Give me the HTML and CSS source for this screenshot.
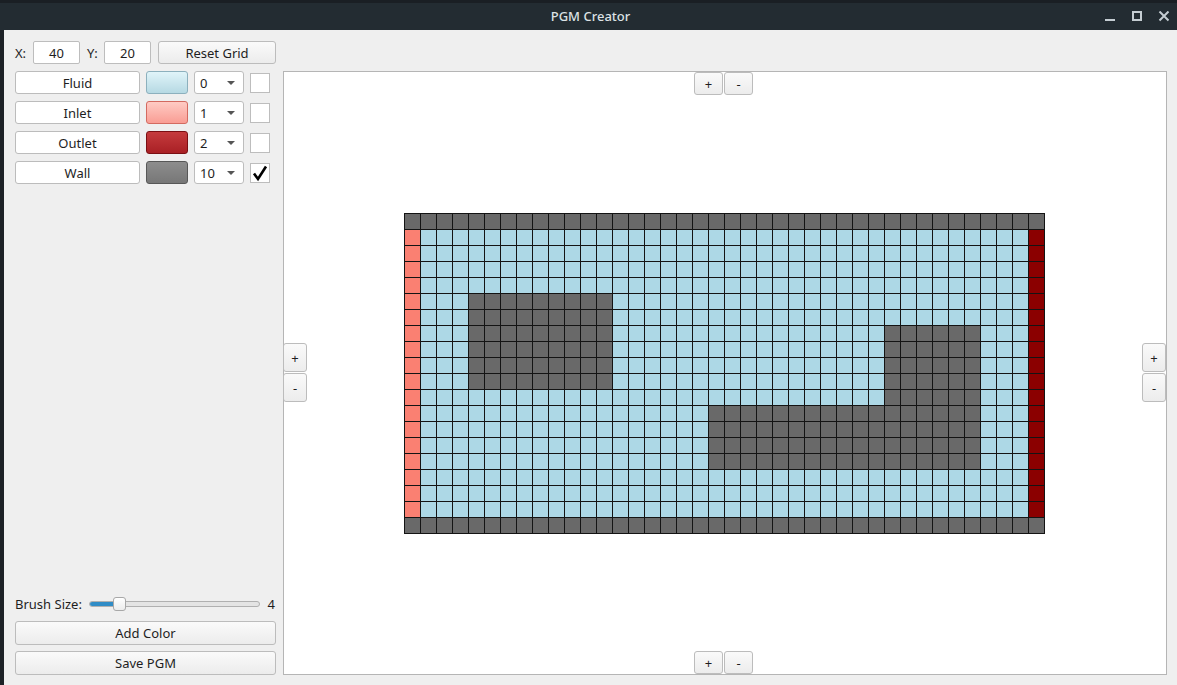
FILE: index.html
```html
<!DOCTYPE html>
<html>
<head>
<meta charset="utf-8">
<title>PGM Creator</title>
<link rel="stylesheet" href="styles.css">
</head>
<body>
<div class="titlebar">
  <span class="title">PGM Creator</span>
  <div class="wincontrols">
    <svg width="12" height="12" viewBox="0 0 12 12"><rect x="1" y="8" width="10" height="2" fill="#c5cdd2"/></svg>
    <svg width="12" height="12" viewBox="0 0 12 12"><rect x="2" y="1" width="8" height="8" fill="none" stroke="#c5cdd2" stroke-width="2"/></svg>
    <svg width="12" height="12" viewBox="0 0 12 12"><path d="M1.5 0.5 L10.5 9.5 M10.5 0.5 L1.5 9.5" stroke="#c5cdd2" stroke-width="2"/></svg>
  </div>
</div>
<div class="window">
  <div class="toprow">
    <span class="lbl lbl-x">X:</span>
    <div class="field">40</div>
    <span class="lbl lbl-y">Y:</span>
    <div class="field">20</div>
    <button class="btn reset">Reset Grid</button>
  </div>

  <div class="canvas">
    <div class="board">
      <div class="c wall row-top"></div>
      <div class="c wall row-bottom"></div>
      <div class="c inlet col-left"></div>
      <div class="c outlet col-right"></div>
      <div class="c wall blk1"></div>
      <div class="c wall blk2"></div>
      <div class="c wall blk3"></div>
    </div>
    <div class="pm pm-top"><button class="btn small">+</button><button class="btn small">-</button></div>
    <div class="pm pm-bottom"><button class="btn small">+</button><button class="btn small">-</button></div>
    <div class="pm pm-left"><button class="btn small v">+</button><button class="btn small v">-</button></div>
    <div class="pm pm-right"><button class="btn small v">+</button><button class="btn small v">-</button></div>
  </div>

  <div class="side">
    <div class="types">
      <div class="trow">
        <button class="btn name">Fluid</button>
        <div class="swatch sw-fluid"></div>
        <div class="combo"><span>0</span><i class="arrow"></i></div>
        <div class="check"></div>
      </div>
      <div class="trow">
        <button class="btn name">Inlet</button>
        <div class="swatch sw-inlet"></div>
        <div class="combo"><span>1</span><i class="arrow"></i></div>
        <div class="check"></div>
      </div>
      <div class="trow">
        <button class="btn name">Outlet</button>
        <div class="swatch sw-outlet"></div>
        <div class="combo"><span>2</span><i class="arrow"></i></div>
        <div class="check"></div>
      </div>
      <div class="trow">
        <button class="btn name">Wall</button>
        <div class="swatch sw-wall"></div>
        <div class="combo"><span>10</span><i class="arrow"></i></div>
        <div class="check"><svg width="18" height="18" viewBox="0 0 18 18"><path d="M3 9.5 L7 15 L15 2.5" fill="none" stroke="#000" stroke-width="2.6" stroke-linejoin="miter"/></svg></div>
      </div>
    </div>
    <div class="bottom">
      <div class="brush">
        <span class="blabel">Brush Size:</span>
        <div class="slider"><div class="groove"><div class="fill"></div></div><div class="handle"></div></div>
        <span class="bval">4</span>
      </div>
      <button class="btn wide">Add Color</button>
      <button class="btn wide">Save PGM</button>
    </div>
  </div>
</div>
</body>
</html>
```
FILE: styles.css
```css
* { box-sizing: border-box; }
html, body { margin: 0; padding: 0; }
body {
  width: 1177px;
  height: 685px;
  background: #1c2126;
  font-family: "Noto Sans", "Open Sans", sans-serif;
  font-size: 13px;
  color: #1e1e1e;
  overflow: hidden;
}
.titlebar {
  height: 30px;
  background: #232c32;
  border-top: 3px solid #1a1f24;
  position: relative;
  display: flex;
  align-items: center;
  justify-content: center;
  padding-left: 4px;
}
.title {
  color: #dde2e5;
  font-weight: 500;
  font-size: 13px;
  margin-top: -2px;
}
.wincontrols {
  position: absolute;
  right: 7px;
  top: 8px;
  display: flex;
  gap: 15px;
}
.window {
  margin-left: 4px;
  height: 655px;
  background: #efefef;
  display: grid;
  grid-template-columns: 261px 1fr;
  grid-template-rows: 23px 1fr;
  column-gap: 7px;
  row-gap: 7px;
  padding: 11px 10px 10px 11px;
}
.toprow {
  grid-column: 1;
  grid-row: 1;
  display: flex;
  align-items: center;
}
.lbl { display: inline-block; }
.lbl-x { width: 18px; }
.lbl-y { width: 17px; margin-left: 7px; }
.field {
  width: 47px;
  height: 23px;
  background: #fff;
  border: 1px solid #bdbdbd;
  border-radius: 2px;
  display: flex;
  align-items: center;
  justify-content: center;
}
.btn {
  font-family: inherit;
  font-size: 13px;
  color: #1e1e1e;
  border: 1px solid #bcbcbc;
  border-radius: 3px;
  background: linear-gradient(#fafafa, #ececec);
  padding: 0;
  margin: 0;
  display: flex;
  align-items: center;
  justify-content: center;
}
.reset { flex: 1; height: 23px; margin-left: 7px; }
.side {
  grid-column: 1;
  grid-row: 2;
  display: flex;
  flex-direction: column;
  justify-content: space-between;
}
.types { display: flex; flex-direction: column; gap: 7px; }
.trow { display: flex; align-items: center; height: 23px; gap: 6px; }
.name { width: 125px; height: 23px; background: #fff; }
.swatch {
  width: 42px;
  height: 23px;
  border-radius: 3px;
  border: 1px solid;
}
.sw-fluid { background: linear-gradient(#e0f4f9, #b6d9e3); border-color: #8cb0bd; }
.sw-inlet { background: linear-gradient(#ffcbc4, #f99d94); border-color: #d36a60; }
.sw-outlet { background: linear-gradient(#c53b3d, #a92025); border-color: #7a0f13; }
.sw-wall { background: linear-gradient(#8d8d8d, #777); border-color: #575757; }
.combo {
  width: 50px;
  height: 23px;
  background: #fff;
  border: 1px solid #bdbdbd;
  border-radius: 3px;
  display: flex;
  align-items: center;
  justify-content: space-between;
  padding: 0 8px 0 5px;
}
.arrow {
  width: 0; height: 0;
  border-left: 4px solid transparent;
  border-right: 4px solid transparent;
  border-top: 4px solid #555;
}
.check {
  width: 20px;
  height: 20px;
  background: #fff;
  border: 1px solid #bdbdbd;
  display: flex;
  align-items: center;
  justify-content: center;
}
.bottom { display: flex; flex-direction: column; gap: 6px; }
.brush {
  display: flex;
  align-items: center;
  height: 16px;
  margin-bottom: 3px;
}
.blabel { width: 74px; }
.slider { position: relative; width: 171px; height: 14px; }
.groove {
  position: absolute;
  left: 0; right: 0; top: 4px;
  height: 6px;
  border: 1px solid #b0b0b0;
  border-radius: 3px;
  background: #e4e4e4;
  overflow: hidden;
}
.fill { width: 26px; height: 100%; background: #308cc6; }
.handle {
  position: absolute;
  left: 24px; top: 0;
  width: 13px; height: 14px;
  border: 1px solid #a8a8a8;
  border-radius: 3px;
  background: linear-gradient(#fff, #ececec);
}
.bval { margin-left: auto; margin-right: 1px; }
.wide { height: 24px; width: 100%; }
.canvas {
  grid-column: 2;
  grid-row: 1 / 3;
  margin-top: 30px;
  position: relative;
  background: #fff;
  border: 1px solid #b5b5b5;
  display: flex;
  align-items: center;
  justify-content: center;
}
.board {
  position: relative;
  display: grid;
  grid-template-columns: repeat(40, 16px);
  grid-template-rows: repeat(20, 16px);
  width: 641px;
  height: 321px;
  padding: 0 1px 1px 0;
  margin-right: 1px;
  margin-top: 1px;
  background: #add8e6;
}
.board::after {
  content: "";
  position: absolute;
  inset: 0;
  background:
    repeating-linear-gradient(90deg, #141414 0 1px, transparent 1px 16px),
    repeating-linear-gradient(180deg, #141414 0 1px, transparent 1px 16px);
}
.wall { background: #696969; }
.inlet { background: #fa8072; }
.outlet { background: #8b0000; }
.row-top { grid-row: 1; grid-column: 1 / 41; }
.row-bottom { grid-row: 20; grid-column: 1 / 41; }
.col-left { grid-column: 1; grid-row: 2 / 20; }
.col-right { grid-column: 40; grid-row: 2 / 20; }
.blk1 { grid-column: 5 / 14; grid-row: 6 / 12; }
.blk2 { grid-column: 31 / 37; grid-row: 8 / 17; }
.blk3 { grid-column: 20 / 37; grid-row: 13 / 17; }
.pm { position: absolute; display: flex; gap: 1px; }
.small { width: 29px; height: 23px; }
.small.v { width: 24px; height: 29px; }
.pm-top { top: 0; left: 410px; }
.pm-bottom { bottom: 0; left: 410px; }
.pm-left { left: -1px; top: 271px; flex-direction: column; }
.pm-right { right: 0; top: 271px; flex-direction: column; }
```
